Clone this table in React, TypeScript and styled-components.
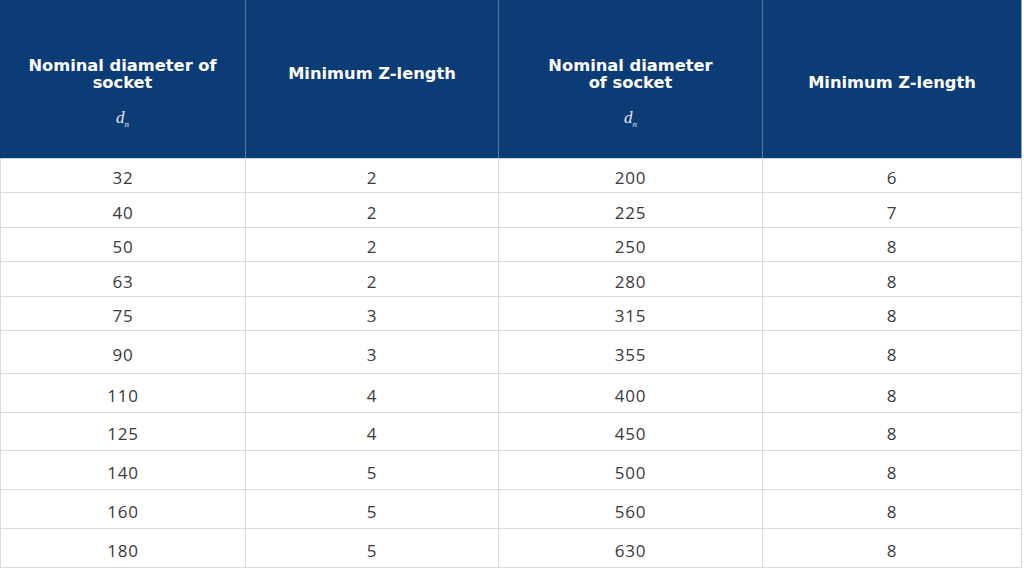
import React from "react";
import styled, { createGlobalStyle } from "styled-components";

const Global = createGlobalStyle`
  html, body { margin: 0; padding: 0; background: #ffffff; }
  * { box-sizing: border-box; }
`;

const COLS = "246px 253px 264px 259px";

const Table = styled.div`
  width: 1022px;
  display: flex;
  flex-direction: column;
  font-family: "Open Sans", "Liberation Sans", sans-serif;
`;

const HeadRow = styled.div`
  display: grid;
  grid-template-columns: ${COLS};
  height: 159px;
  background: #0c3c76;
  border-bottom: 1px solid #c7d4e4;
`;

const HeadCell = styled.div<{ $top: number; $last?: boolean }>`
  display: flex;
  flex-direction: column;
  align-items: center;
  padding-top: ${(p) => p.$top}px;
  border-right: 1px solid ${(p) => (p.$last ? "#8ea6c4" : "#5a7aa3")};
  color: #ffffff;
  font-family: "DejaVu Sans", "Open Sans", sans-serif;
  font-weight: 700;
  font-size: 16.3px;
  line-height: 17px;
  text-align: center;
`;

const HeadLabel = styled.div`
  white-space: pre-line;
`;

const Symbol = styled.div`
  margin-top: 19px;
  font-family: "Liberation Serif", "Times New Roman", serif;
  font-style: italic;
  font-weight: 400;
  font-size: 17px;
  line-height: 16px;
  color: #e4ebf5;
`;

const Sub = styled.sub`
  font-size: 9px;
  vertical-align: -4px;
`;

const BodyRow = styled.div<{ $h: number }>`
  display: grid;
  grid-template-columns: ${COLS};
  height: ${(p) => p.$h}px;
  border-bottom: 1px solid #dcdcdc;
`;

const Cell = styled.div<{ $first?: boolean }>`
  display: flex;
  align-items: center;
  justify-content: center;
  border-right: 1px solid #dcdcdc;
  border-left: ${(p) => (p.$first ? "1px solid #dcdcdc" : "none")};
  color: #3a3a3a;
  font-size: 17px;
  letter-spacing: 0.8px;
  font-weight: 400;
  padding-top: 4px;
`;

const rows: [string, string, string, string, number][] = [
  ["32", "2", "200", "6", 34],
  ["40", "2", "225", "7", 35],
  ["50", "2", "250", "8", 34],
  ["63", "2", "280", "8", 35],
  ["75", "3", "315", "8", 34],
  ["90", "3", "355", "8", 43],
  ["110", "4", "400", "8", 39],
  ["125", "4", "450", "8", 38],
  ["140", "5", "500", "8", 39],
  ["160", "5", "560", "8", 39],
  ["180", "5", "630", "8", 39],
];

export default function App() {
  return (
    <>
      <Global />
      <Table>
        <HeadRow>
          <HeadCell $top={57}>
            <HeadLabel>{"Nominal diameter of\nsocket"}</HeadLabel>
            <Symbol>
              d<Sub>n</Sub>
            </Symbol>
          </HeadCell>
          <HeadCell $top={65}>
            <HeadLabel>Minimum Z-length</HeadLabel>
          </HeadCell>
          <HeadCell $top={57}>
            <HeadLabel>{"Nominal diameter\nof socket"}</HeadLabel>
            <Symbol>
              d<Sub>n</Sub>
            </Symbol>
          </HeadCell>
          <HeadCell $top={74} $last>
            <HeadLabel>Minimum Z-length</HeadLabel>
          </HeadCell>
        </HeadRow>
        {rows.map(([a, b, c, d, h]) => (
          <BodyRow key={a} $h={h}>
            <Cell $first>{a}</Cell>
            <Cell>{b}</Cell>
            <Cell>{c}</Cell>
            <Cell>{d}</Cell>
          </BodyRow>
        ))}
      </Table>
    </>
  );
}
